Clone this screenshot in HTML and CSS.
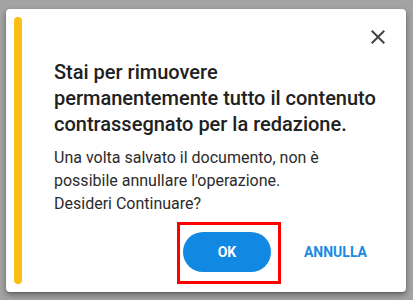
FILE: index.html
```html
<!DOCTYPE html>
<html lang="it">
<head>
<meta charset="utf-8">
<link rel="stylesheet" href="styles.css">
</head>
<body>
<div class="dialog">
  <div class="bar"></div>
  <div class="content">
    <div class="close-row">
      <button class="close" aria-label="Chiudi">
        <svg width="24" height="24" viewBox="0 0 24 24"><path d="M19 6.41 17.59 5 12 10.59 6.41 5 5 6.41 10.59 12 5 17.59 6.41 19 12 13.41 17.59 19 19 17.59 13.41 12z" fill="#444"/></svg>
      </button>
    </div>
    <h2 class="title">Stai per rimuovere permanentemente tutto il contenuto contrassegnato per la redazione.</h2>
    <p class="body">Una volta salvato il documento, non è possibile annullare l'operazione.<br>Desideri Continuare?</p>
    <div class="actions">
      <div class="ok-wrap">
        <button class="btn-ok">OK</button>
        <div class="highlight"></div>
      </div>
      <button class="btn-text">ANNULLA</button>
    </div>
  </div>
</div>
</body>
</html>
```
FILE: styles.css
```css
html, body {
  margin: 0;
  padding: 0;
}
body {
  width: 413px;
  height: 300px;
  background: #a3a3a3;
  font-family: Roboto, "Liberation Sans", sans-serif;
  padding: 9px 0 0 6px;
  box-sizing: border-box;
}
.dialog {
  width: 400px;
  height: 283px;
  box-sizing: border-box;
  background: #fff;
  border-radius: 4px;
  box-shadow: 0 3px 6px rgba(0,0,0,0.35), 0 1px 2px rgba(0,0,0,0.2);
  padding: 8px;
  display: flex;
}
.bar {
  width: 8px;
  background: #fcbd15;
  border-radius: 4px;
  flex: none;
}
.content {
  flex: 1;
  display: flex;
  flex-direction: column;
  padding: 8px 8px 12px 32px;
}
.close-row {
  display: flex;
  justify-content: flex-end;
  height: 24px;
}
.close {
  border: 0;
  background: none;
  padding: 0;
  width: 24px;
  height: 24px;
  cursor: pointer;
}
.close svg { display: block; }
.title {
  margin: 10px 0 0;
  max-width: 326px;
  font-size: 20px;
  line-height: 26px;
  font-weight: 500;
  color: #212121;
}
.body {
  margin: 9px 0 0;
  max-width: 326px;
  font-size: 16px;
  line-height: 23px;
  color: #2b2b2b;
}
.actions {
  margin-top: auto;
  display: flex;
  justify-content: flex-end;
  align-items: center;
  gap: 17px;
  padding-right: 7px;
}
.ok-wrap {
  position: relative;
}
.btn-ok {
  display: block;
  width: 88px;
  height: 40px;
  border: 0;
  border-radius: 20px;
  background: #1188e2;
  color: #fff;
  font-family: Roboto, "Liberation Sans", sans-serif;
  font-size: 14px;
  font-weight: 700;
}
.highlight {
  position: absolute;
  left: -6px;
  top: -10px;
  width: 98px;
  height: 56px;
  border: 3px solid #ff0000;
  pointer-events: none;
}
.btn-text {
  border: 0;
  background: none;
  padding: 0 16px;
  height: 40px;
  color: #1a8ae2;
  font-family: Roboto, "Liberation Sans", sans-serif;
  font-size: 14px;
  font-weight: 700;
}
```
